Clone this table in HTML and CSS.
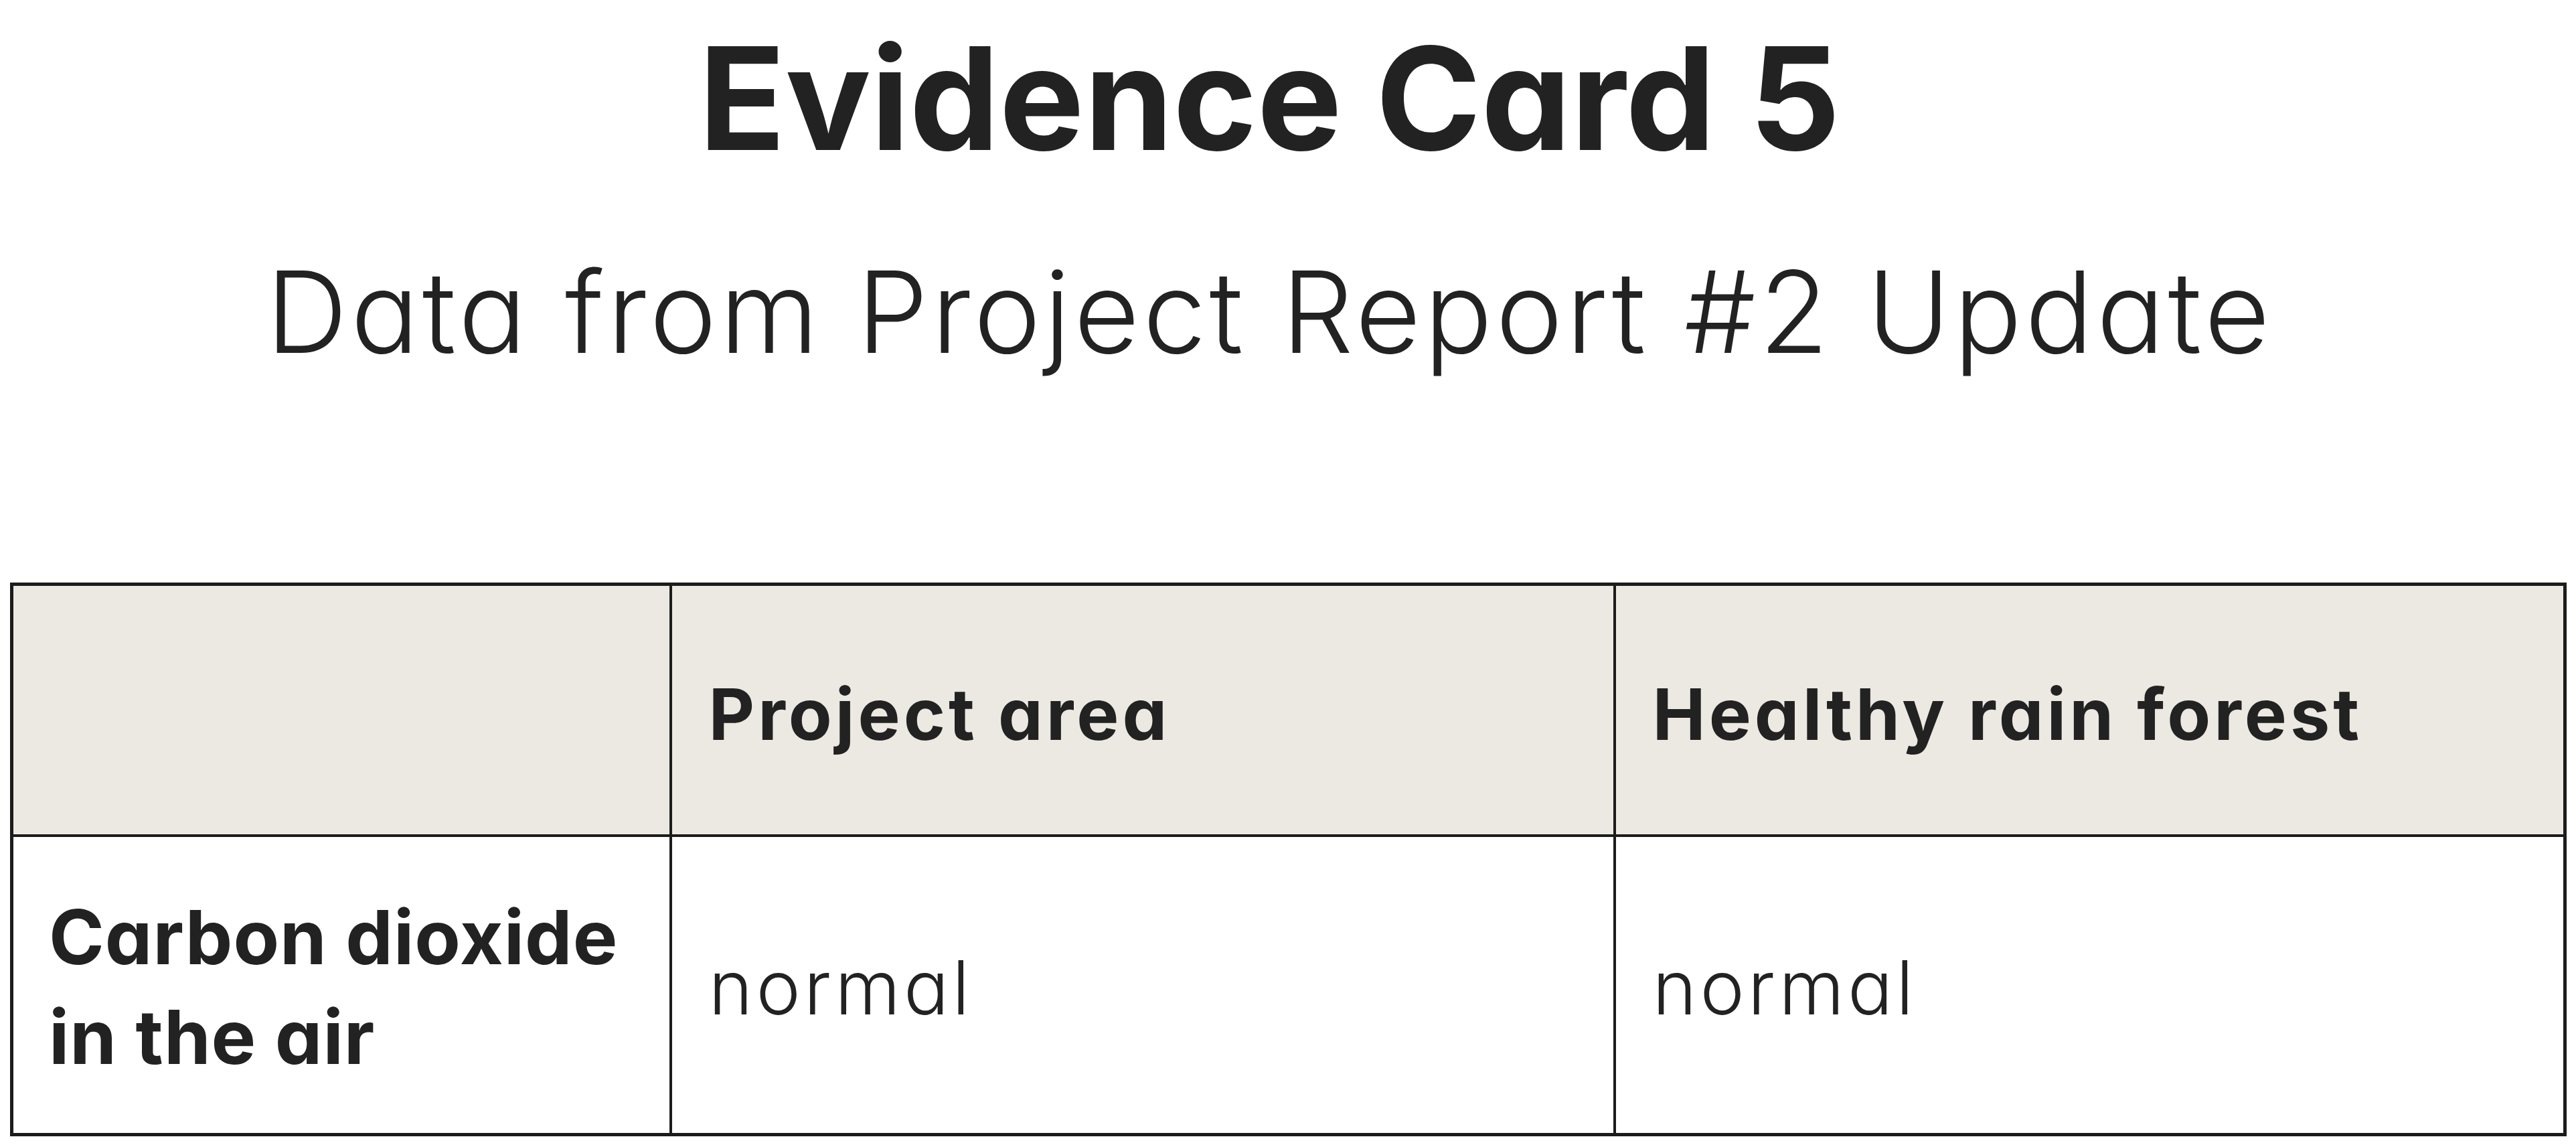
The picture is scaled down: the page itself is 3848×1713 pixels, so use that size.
FILE: index.html
```html
<!DOCTYPE html>
<html lang="en">
<head>
<meta charset="utf-8">
<title>Evidence Card 5</title>
<link rel="stylesheet" href="styles.css">
</head>
<body>
<main class="card">
  <header class="card-head">
    <h1 class="card-title">Evidence Card 5</h1>
    <p class="card-subtitle">Data from Project Report #2 Update</p>
  </header>
  <table class="data-table">
    <colgroup>
      <col class="col-label">
      <col class="col-project">
      <col class="col-forest">
    </colgroup>
    <thead>
      <tr class="head-row">
        <th class="head-cell"></th>
        <th class="head-cell">Project area</th>
        <th class="head-cell">Healthy rain forest</th>
      </tr>
    </thead>
    <tbody>
      <tr class="body-row">
        <th class="row-label">Carbon dioxide<br>in the air</th>
        <td class="value-cell">normal</td>
        <td class="value-cell">normal</td>
      </tr>
    </tbody>
  </table>
</main>
</body>
</html>
```

FILE: styles.css
```css
html, body {
  margin: 0;
  padding: 0;
  background: #ffffff;
}

body {
  font-family: "Inter", "Lato", "Liberation Sans", sans-serif;
  font-feature-settings: "cv11" 1;
  color: #222222;
  width: 3848px;
  height: 1713px;
  overflow: hidden;
}

.card {
  display: flex;
  flex-direction: column;
  padding: 0 0 0 15px;
}

.card-head {
  display: flex;
  flex-direction: column;
  align-items: center;
  padding-right: 70px;
}

.card-title {
  margin: 40px 0 0 0;
  font-size: 213px;
  line-height: 1;
  font-weight: 700;
  letter-spacing: 0;
}

.card-subtitle {
  margin: 128px 0 0 0;
  font-size: 169px;
  line-height: 1;
  font-weight: 300;
  letter-spacing: 5px;
}

.data-table {
  margin-top: 320px;
  width: 3814px;
  border-collapse: collapse;
  table-layout: fixed;
  border: 5px solid #1c1c1c;
}

.col-label { width: 984px; }
.col-project { width: 1410px; }
.col-forest { width: 1420px; }

.head-row {
  height: 375px;
  background: #ece8e2;
}

.head-cell {
  border: 4px solid #1c1c1c;
  text-align: left;
  vertical-align: middle;
  padding: 12px 0 0 55px;
  font-size: 106px;
  font-weight: 700;
  line-height: 1.2;
  letter-spacing: 5px;
}

.body-row {
  height: 447px;
}

.row-label {
  border: 4px solid #1c1c1c;
  text-align: left;
  vertical-align: middle;
  padding: 6px 0 0 53px;
  font-size: 112px;
  font-weight: 700;
  line-height: 149px;
  letter-spacing: 1px;
}

.value-cell {
  border: 4px solid #1c1c1c;
  vertical-align: middle;
  padding: 6px 0 0 55px;
  font-size: 112px;
  font-weight: 300;
  line-height: 1.2;
  letter-spacing: 5px;
}
```
